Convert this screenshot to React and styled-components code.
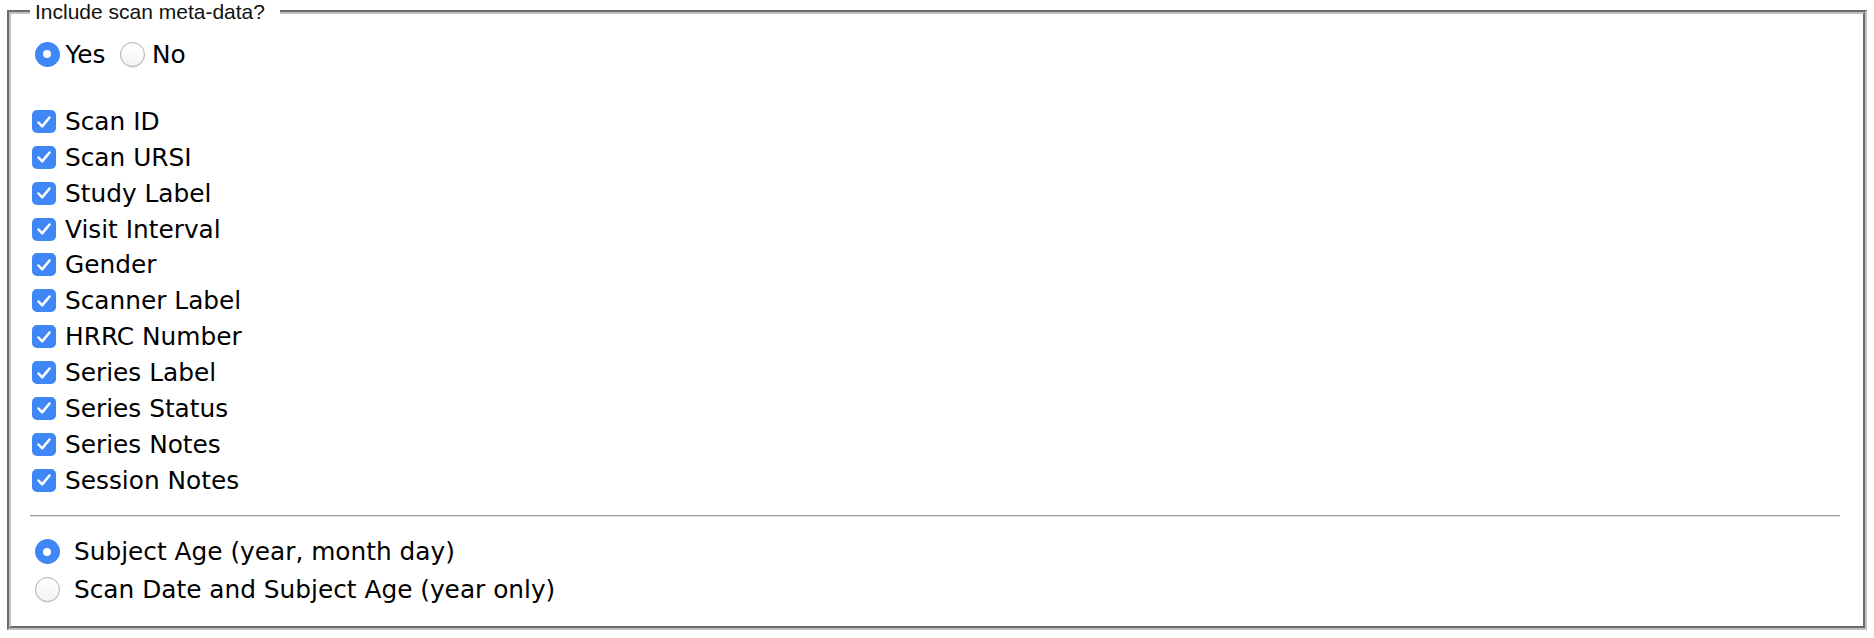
import React from "react";
import styled, { createGlobalStyle } from "styled-components";

const GlobalStyle = createGlobalStyle`
  html, body { margin: 0; padding: 0; background: #ffffff; }
  body { font-family: "DejaVu Sans", "Liberation Sans", sans-serif; }
`;

const Fieldset = styled.fieldset`
  box-sizing: border-box;
  margin: 0 7px;
  height: 630px;
  border: 4px groove #c0c0c0;
  padding: 12px 23px 18px 19px;
  min-width: 0;
  display: flex;
  flex-direction: column;
`;

const Legend = styled.legend`
  font-family: "Liberation Sans", Arial, sans-serif;
  font-size: 21px;
  line-height: 24px;
  color: #111;
  padding: 0 15px 0 5px;
`;

const Row = styled.label`
  display: flex;
  align-items: center;
  height: ${(p) => p.$h}px;
  font-family: "DejaVu Sans", sans-serif;
  font-size: 24.8px;
  color: #000;
  white-space: nowrap;
  cursor: default;
`;

const Inline = styled.div`
  display: flex;
  align-items: center;
  height: 36px;
`;

const CheckList = styled.div`
  display: flex;
  flex-direction: column;
  margin-top: 31.6px;
`;

const Divider = styled.hr`
  margin: 17px 0 15.75px 0;
  border: none;
  border-top: 1px solid #9a9a9a;
  border-bottom: 1px solid #e4e4e4;
  height: 0;
`;

const Radio = styled.span`
  box-sizing: border-box;
  flex: none;
  width: 25px;
  height: 25px;
  border-radius: 50%;
  margin-left: ${(p) => p.$ml || 0}px;
  margin-right: ${(p) => p.$mr}px;
  display: flex;
  align-items: center;
  justify-content: center;
  background: ${(p) => (p.$on ? "#3f86f6" : "linear-gradient(#ffffff, #f3f3f3)")};
  border: ${(p) => (p.$on ? "none" : "1px solid #adadad")};
  box-shadow: ${(p) => (p.$on ? "none" : "0 1px 1px rgba(0,0,0,0.08)")};
  &::after {
    content: "";
    display: ${(p) => (p.$on ? "block" : "none")};
    width: 8px;
    height: 8px;
    border-radius: 50%;
    background: #ffffff;
  }
`;

const Box = styled.span`
  box-sizing: border-box;
  flex: none;
  width: 24px;
  height: 23px;
  margin-left: 2px;
  margin-right: 9px;
  border-radius: 5px;
  background: #3f86f6;
  display: flex;
  align-items: center;
  justify-content: center;
`;

const CheckIcon = () => (
  <svg width="16" height="14" viewBox="0 0 16 14" fill="none">
    <path d="M2.5 7.5 L6.2 11.4 L13.5 2.5" stroke="#ffffff" strokeWidth="2.5" strokeLinecap="round" strokeLinejoin="round" />
  </svg>
);

const Text = styled.span`
  margin-right: ${(p) => p.$mr || 0}px;
`;

const fields = [
  "Scan ID",
  "Scan URSI",
  "Study Label",
  "Visit Interval",
  "Gender",
  "Scanner Label",
  "HRRC Number",
  "Series Label",
  "Series Status",
  "Series Notes",
  "Session Notes",
];

export default function App() {
  return (
    <>
      <GlobalStyle />
      <Fieldset>
        <Legend>Include scan meta-data?</Legend>
        <Inline>
          <Row $h={36}>
            <Radio $on $ml={4.5} $mr={6} />
            <Text $mr={14}>Yes</Text>
          </Row>
          <Row $h={36}>
            <Radio $mr={7.5} />
            <Text>No</Text>
          </Row>
        </Inline>
        <CheckList>
          {fields.map((f) => (
            <Row key={f} $h={35.86}>
              <Box>
                <CheckIcon />
              </Box>
              <Text>{f}</Text>
            </Row>
          ))}
        </CheckList>
        <Divider />
        <Row $h={37.5}>
          <Radio $on $ml={4.5} $mr={14.5} />
          <Text>Subject Age (year, month day)</Text>
        </Row>
        <Row $h={37.5}>
          <Radio $ml={4.5} $mr={14.5} />
          <Text>Scan Date and Subject Age (year only)</Text>
        </Row>
      </Fieldset>
    </>
  );
}
